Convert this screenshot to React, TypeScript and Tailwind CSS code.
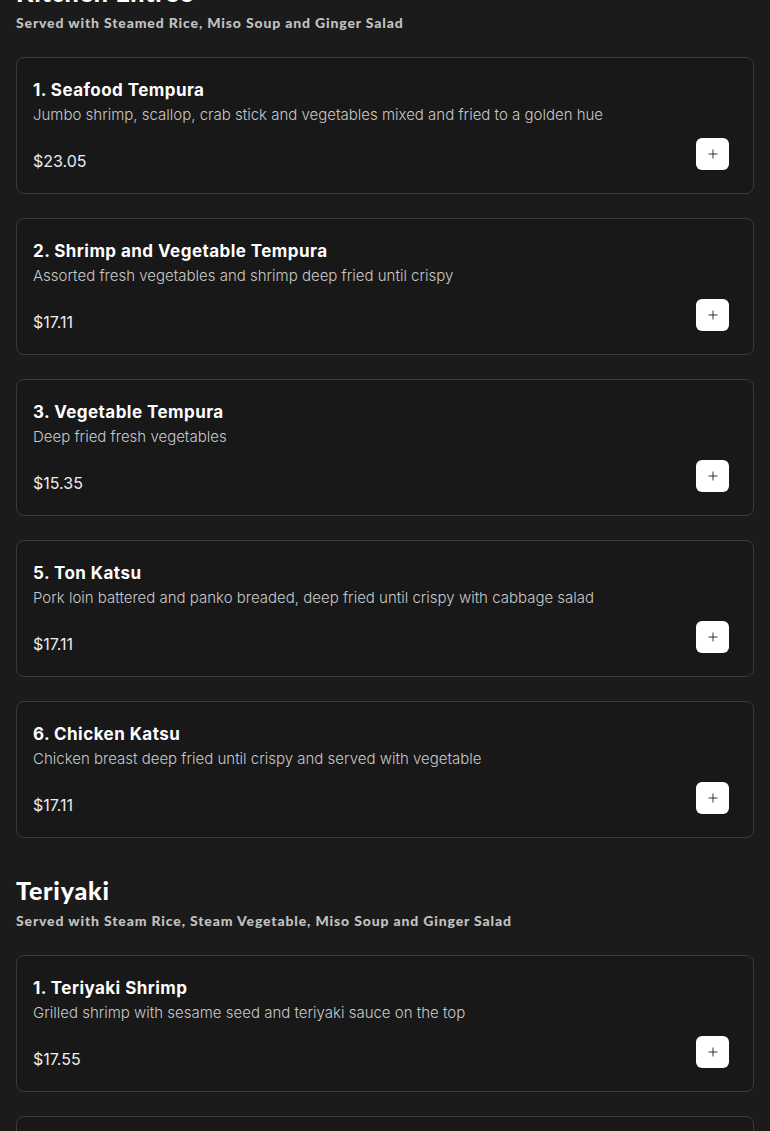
import { Plus } from "lucide-react"

interface MenuItem {
  name: string
  description: string
  price: string
}

interface MenuSection {
  title: string
  subtitle: string
  items: MenuItem[]
}

const sections: MenuSection[] = [
  {
    title: "Kitchen Entree",
    subtitle: "Served with Steamed Rice, Miso Soup and Ginger Salad",
    items: [
      {
        name: "1. Seafood Tempura",
        description:
          "Jumbo shrimp, scallop, crab stick and vegetables mixed and fried to a golden hue",
        price: "$23.05",
      },
      {
        name: "2. Shrimp and Vegetable Tempura",
        description: "Assorted fresh vegetables and shrimp deep fried until crispy",
        price: "$17.11",
      },
      {
        name: "3. Vegetable Tempura",
        description: "Deep fried fresh vegetables",
        price: "$15.35",
      },
      {
        name: "5. Ton Katsu",
        description:
          "Pork loin battered and panko breaded, deep fried until crispy with cabbage salad",
        price: "$17.11",
      },
      {
        name: "6. Chicken Katsu",
        description: "Chicken breast deep fried until crispy and served with vegetable",
        price: "$17.11",
      },
    ],
  },
  {
    title: "Teriyaki",
    subtitle: "Served with Steam Rice, Steam Vegetable, Miso Soup and Ginger Salad",
    items: [
      {
        name: "1. Teriyaki Shrimp",
        description: "Grilled shrimp with sesame seed and teriyaki sauce on the top",
        price: "$17.55",
      },
      {
        name: "2. Teriyaki Chicken",
        description: "Grilled chicken with teriyaki sauce on the top",
        price: "$15.35",
      },
    ],
  },
]

const MenuCard = ({ item }: { item: MenuItem }) => {
  return (
    <div className="flex items-end justify-between rounded-lg border border-[#3a3a3a] bg-[#181818] px-4 pt-[18px] pb-5">
      <div className="flex flex-col">
        <h4 className="text-[17px] leading-7 font-bold tracking-[0.45px] text-white">
          {item.name}
        </h4>
        <p className="-mt-px text-[15px] leading-6 font-light text-[#c9c9c9]">
          {item.description}
        </p>
        <p className="mt-[22px] text-base leading-6 text-[#ececec]">{item.price}</p>
      </div>
      <button
        type="button"
        className="mr-[8px] mb-[3px] flex h-8 w-[33px] items-center justify-center rounded-md bg-white text-[#1a1a1a]"
      >
        <Plus size={14} strokeWidth={1.5} />
      </button>
    </div>
  )
}

const App = () => {
  return (
    <div className="min-h-screen bg-[#1b1b1b] px-4 pb-10 font-['Inter',sans-serif]">
      <div className="-mt-[24px] flex flex-col gap-[36px]">
        {sections.map((section) => (
          <section key={section.title}>
            <h2 className="font-['Lato',sans-serif] text-[25px] leading-8 font-black tracking-[0.8px] text-white">
              {section.title}
            </h2>
            <p className="mt-[5px] font-['Lato',sans-serif] text-sm leading-5 font-black tracking-[0.85px] text-[#c2c2c2]">
              {section.subtitle}
            </p>
            <div className="mt-6 flex flex-col gap-6">
              {section.items.map((item) => (
                <MenuCard key={item.name} item={item} />
              ))}
            </div>
          </section>
        ))}
      </div>
    </div>
  )
}

export default App
